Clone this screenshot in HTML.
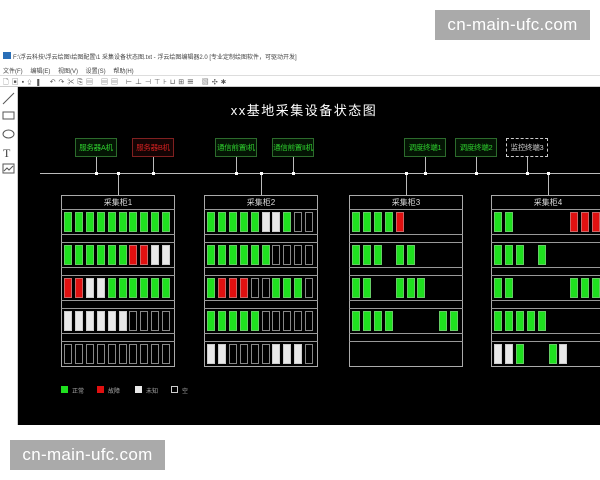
<!DOCTYPE html>
<html><head><meta charset="utf-8"><style>
*{margin:0;padding:0;box-sizing:border-box}
body{width:600px;height:480px;background:#fff;position:relative;overflow:hidden;font-family:"Liberation Sans","Noto Sans CJK SC",sans-serif}
.a{position:absolute}
.wm{background:#aaa;color:#fff;font-size:17px;text-align:center;line-height:30px;letter-spacing:0.3px}
.cv{left:18px;top:87px;width:582px;height:338px;background:#000}
.box{height:19px;border:1px solid #2c6b2c;background:#041404;color:#2ed02e;font-size:7.5px;text-align:center;line-height:17px;white-space:nowrap;overflow:hidden;letter-spacing:-0.3px}
.v{width:1px;background:#bbb}
.dot{width:3px;height:3px;background:#fff}
.cab{border:1px solid #aaa;width:114px;height:172px}
.s{width:8px;height:20px;border:1px solid #888}
.g{background:#1fe01f;border-color:#6c6}
.r{background:#e01010;border-color:#c66}
.w{background:#e8e8e8;border-color:#ccc}
.hl{height:1px;background:#999}
</style></head><body>
<div class="a wm" style="left:435px;top:10px;width:155px;height:30px">cn-main-ufc.com</div>
<div class="a wm" style="left:10px;top:440px;width:155px;height:30px">cn-main-ufc.com</div>
<div class="a" style="left:3px;top:52px;width:8px;height:7px;background:#2a6fb8"></div>
<div class="a" style="left:13px;top:52px;font-size:6px;color:#444;white-space:nowrap">F:\浮云科技\浮云绘图\绘图配置\1 采集设备状态图.txt - 浮云绘图编辑器2.0 [专业定制绘图软件，可驱动开发]</div>
<div class="a" style="left:3px;top:66px;font-size:6px;color:#444;word-spacing:6px;white-space:nowrap">文件(F) 编辑(E) 视图(V) 设置(S) 帮助(H)</div>
<div class="a" style="left:0;top:75px;width:600px;height:1px;background:#ddd"></div>
<div class="a" style="left:3px;top:77px;font-size:7px;color:#555;letter-spacing:3px;white-space:nowrap">🗋▣▪⇪▮ ↶↷✂⎘▤ ▤▤ ⊢⊥⊣⊤⊦⊔⊞☰ ▧✣✱</div>
<div class="a" style="left:0;top:86px;width:600px;height:1px;background:#ccc"></div>
<div class="a" style="left:17px;top:87px;width:1px;height:338px;background:#ccc"></div>
<svg class="a" style="left:0;top:88px" width="17" height="100"><g stroke="#555" fill="none"><line x1="3" y1="16" x2="14" y2="5"/><rect x="3" y="24" width="11" height="7"/><ellipse cx="8.5" cy="46" rx="5.5" ry="4"/><rect x="3" y="76" width="11" height="9"/><path d="M4 83l3-3 2 2 4-4"/></g><text x="3" y="69" font-size="12" fill="#444" font-family="Liberation Serif">T</text></svg>
<div class="a cv"></div>
<div class="a" style="left:0;top:100px;width:600px;text-align:center;color:#fff;font-size:13px;letter-spacing:1.5px;padding-left:8px">xx基地采集设备状态图</div>
<div class="a" style="left:40px;top:173px;width:560px;height:1px;background:#bbb"></div>
<div id="d"></div>
<div class="a" style="left:61px;top:386px;width:7px;height:7px;background:#1fe01f"></div><div class="a" style="left:72px;top:386px;font-size:6px;color:#aaa">正常</div>
<div class="a" style="left:97px;top:386px;width:7px;height:7px;background:#e01010"></div><div class="a" style="left:108px;top:386px;font-size:6px;color:#aaa">故障</div>
<div class="a" style="left:135px;top:386px;width:7px;height:7px;background:#e8e8e8"></div><div class="a" style="left:146px;top:386px;font-size:6px;color:#aaa">未知</div>
<div class="a" style="left:171px;top:386px;width:7px;height:7px;border:1px solid #ccc"></div><div class="a" style="left:182px;top:386px;font-size:6px;color:#aaa">空</div>
<script>
var h='';
var boxes=[[75,'服务器A机',''],[132,'服务器B机','r'],[215,'通信前置I机',''],[272,'通信前置II机',''],[404,'调度终端1',''],[455,'调度终端2',''],[506,'监控终端3','m']];
boxes.forEach(function(b){var st='left:'+b[0]+'px;top:138px;width:42px;';
if(b[2]=='r')st+='border-color:#802020;background:#140404;color:#d02020;';
if(b[2]=='m')st+='border:1px dashed #ccc;background:#000;color:#ccc;';
h+='<div class="a box" style="'+st+'">'+b[1]+'</div>';
h+='<div class="a v" style="left:'+(b[0]+21)+'px;top:157px;height:16px"></div><div class="a dot" style="left:'+(b[0]+20)+'px;top:172px"></div>';});
var cabs=[[61,'采集柜1',['GGGGGGGGGG','GGGGGGRRWW','RRWWGGGGGG','WWWWWWEEEE','EEEEEEEEEE']],
[204,'采集柜2',['GGGGGWWGEE','GGGGGGEEEE','GRRREEGGGE','GGGGGEEEEE','WWEEEEWWWE']],
[349,'采集柜3',['GGGGR.....','GGG.GG....','GG..GGG...','GGGG....GG','..........']],
[491,'采集柜4',['GG.....RRR','GGG.G.....','GG.....GGG','GGGGG.....','WWG..GW...']]];
cabs.forEach(function(c){var x=c[0];
h+='<div class="a v" style="left:'+(x+57)+'px;top:173px;height:22px"></div><div class="a dot" style="left:'+(x+56)+'px;top:172px"></div>';
h+='<div class="a cab" style="left:'+x+'px;top:195px"></div>';
h+='<div class="a" style="left:'+x+'px;top:197px;width:114px;text-align:center;color:#ddd;font-size:8px">'+c[1]+'</div>';
h+='<div class="a hl" style="left:'+x+'px;top:209px;width:114px"></div>';
for(var r=0;r<5;r++){var y=212+r*33;
if(r<4){h+='<div class="a hl" style="left:'+x+'px;top:'+(y+22)+'px;width:114px"></div><div class="a hl" style="left:'+x+'px;top:'+(y+30)+'px;width:114px"></div>';}
for(var i=0;i<10;i++){var t=c[2][r][i];if(t=='.')continue;
var cl={G:'g',R:'r',W:'w',E:''}[t];
h+='<div class="a s '+cl+'" style="left:'+(x+3+i*10.9)+'px;top:'+y+'px"></div>';}}
});
document.getElementById('d').innerHTML=h;
</script>
</body></html>
